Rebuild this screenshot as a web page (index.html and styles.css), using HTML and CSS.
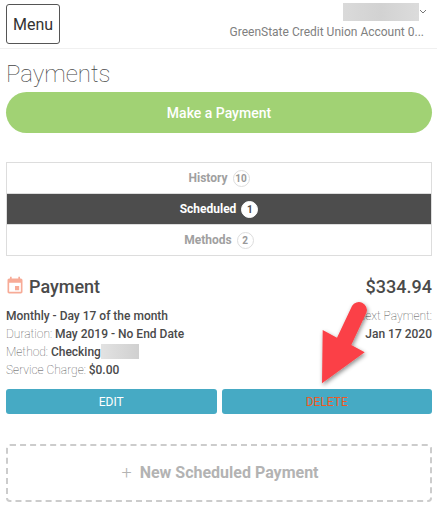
FILE: index.html
```html
<!DOCTYPE html>
<html lang="en">
<head>
    <meta charset="UTF-8">
    <meta name="viewport" content="width=device-width, initial-scale=1.0">
    <title>Payments</title>
    <link rel="stylesheet" href="styles.css">
</head>
<body>
    <div class="topbar">
        <button class="menu-btn">Menu</button>
        <div class="account">
            <div class="account-top">
                <span class="blur-name"></span>
                <svg class="chevron" width="8" height="5" viewBox="0 0 8 5"><path d="M1 1l3 3 3-3" fill="none" stroke="#777" stroke-width="1"/></svg>
            </div>
            <div class="account-name">GreenState Credit Union Account 0...</div>
        </div>
    </div>

    <div class="page">
        <h1 class="page-title">Payments</h1>
        <button class="pay-btn">Make a Payment</button>

        <ul class="tabs">
            <li class="tab">History <span class="count">10</span></li>
            <li class="tab active">Scheduled <span class="count">1</span></li>
            <li class="tab">Methods <span class="count">2</span></li>
        </ul>

        <div class="payment">
            <div class="payment-head">
                <h2 class="payment-title">
                    <svg class="cal-icon" width="20" height="20" viewBox="0 0 24 24"><path fill="#f7ab97" d="M19 3h-1V1h-2v2H8V1H6v2H5c-1.100 0-2 .9-2 2v14c0 1.100.9 2 2 2h14c1.100 0 2-.9 2-2V5c0-1.100-.9-2-2-2zm0 16H5V8h14v11zM12 12h5v5h-5z"/></svg>
                    Payment
                </h2>
                <div class="amount">$334.94</div>
            </div>
            <div class="details">
                <div class="details-left">
                    <div><b>Monthly - Day 17 of the month</b></div>
                    <div>Duration: <b>May 2019 - No End Date</b></div>
                    <div>Method: <b>Checking</b><span class="blur-acct"></span></div>
                    <div>Service Charge: <b>$0.00</b></div>
                </div>
                <div class="details-right">
                    <div>Next Payment:</div>
                    <div><b>Jan 17 2020</b></div>
                </div>
            </div>
            <div class="actions">
                <button class="action-btn">EDIT</button>
                <button class="action-btn delete">DELETE</button>
            </div>
        </div>

        <div class="new-payment"><span class="plus">+</span> New Scheduled Payment</div>
    </div>

    <svg class="arrow" width="60" height="100" viewBox="0 0 60 100">
        <defs>
            <filter id="shadow" x="-30%" y="-30%" width="160%" height="160%">
                <feDropShadow dx="1" dy="2" stdDeviation="2" flood-color="#000" flood-opacity="0.45"/>
            </filter>
        </defs>
        <path filter="url(#shadow)" fill="#fb4146" d="M20 41.700L35 10A8 8 0 0 1 49.500 16.500L34.300 49L47.700 56.300L5 87.300L5.700 34Z"/>
    </svg>
</body>
</html>
```

FILE: styles.css
```css
* {
    box-sizing: border-box;
}

body {
    margin: 0;
    font-family: Roboto, sans-serif;
    color: #4a4a4a;
    background-color: #fff;
    position: relative;
}

button {
    font-family: Roboto, sans-serif;
    cursor: pointer;
}

.topbar {
    display: flex;
    justify-content: space-between;
    height: 49px;
    padding: 4px 13px 0 6px;
    border-bottom: 1px solid #f0f0f0;
}

.menu-btn {
    width: 54px;
    height: 40px;
    padding: 0;
    font-size: 16px;
    color: #333;
    background: #fff;
    border: 1px solid #555;
    border-radius: 3px;
}

.account {
    display: flex;
    flex-direction: column;
    align-items: flex-end;
}

.account-top {
    display: flex;
    align-items: center;
    height: 18px;
    margin-top: -1px;
}

.blur-name {
    width: 76px;
    height: 18px;
    background: linear-gradient(90deg, #dadada, #d2d2d2 50%, #dcdcdc);
}

.chevron {
    margin: 0 -3px 0 0;
    position: relative;
    top: -1px;
}

.account-name {
    margin-top: 3px;
    font-size: 12px;
    line-height: 16px;
    color: #808080;
    white-space: nowrap;
}

.page {
    padding: 0 5px 0 6px;
}

.page-title {
    margin: 9px 0 2px;
    font-size: 24px;
    font-weight: 100;
    line-height: 32px;
    color: #444;
}

.pay-btn {
    display: block;
    width: 100%;
    height: 41px;
    font-size: 14px;
    font-weight: 500;
    color: #fff;
    background-color: #a1d274;
    border: none;
    border-radius: 21px;
}

.tabs {
    list-style: none;
    margin: 29px 0 0;
    padding: 0;
    border: 1px solid #ddd;
}

.tab {
    height: 31px;
    font-size: 12px;
    font-weight: 700;
    line-height: 30px;
    text-align: center;
    color: #a0a0a0;
}

.tab:first-child {
    height: 30px;
}

.tab + .tab {
    border-top: 1px solid #ddd;
}

.tab.active {
    color: #fff;
    background-color: #4d4d4d;
}

.count {
    display: inline-block;
    width: 17px;
    height: 17px;
    margin-left: 2px;
    font-size: 10px;
    line-height: 15px;
    text-align: center;
    color: #999;
    border: 1px solid #ddd;
    border-radius: 50%;
    vertical-align: middle;
}

.tab.active .count {
    color: #4d4d4d;
    background: #fff;
    border-color: #fff;
}

.payment {
    margin-top: 19px;
}

.payment-head {
    display: flex;
    justify-content: space-between;
    align-items: center;
    height: 22px;
}

.payment-title {
    display: flex;
    align-items: center;
    margin: 0;
    font-size: 18px;
    font-weight: 500;
}

.cal-icon {
    margin: 0 4px 0 -1px;
}

.amount {
    font-size: 18px;
    font-weight: 500;
}

.details {
    display: flex;
    justify-content: space-between;
    margin-top: 10px;
    font-size: 12px;
    font-weight: 100;
    line-height: 18px;
}

.details b {
    font-weight: 500;
}

.details-right {
    text-align: right;
}

.blur-acct {
    display: inline-block;
    width: 38px;
    height: 15px;
    vertical-align: -3px;
    background: linear-gradient(90deg, #e2e2e2, #d0d0d0);
}

.actions {
    display: flex;
    gap: 5px;
    margin-top: 10px;
}

.action-btn {
    flex: 1;
    height: 25px;
    padding: 0;
    font-size: 12px;
    color: #fff;
    background-color: #46aac4;
    border: none;
    border-radius: 3px;
}

.action-btn.delete {
    color: #ee5a24;
}

.new-payment {
    display: flex;
    align-items: center;
    justify-content: center;
    gap: 8px;
    height: 58px;
    margin-top: 30px;
    padding: 0 0 2px 2px;
    font-size: 16px;
    font-weight: 700;
    color: #b3b3b3;
    border: 2px dashed #ccc;
    border-radius: 4px;
}

.plus {
    font-size: 18px;
    font-weight: 300;
}

.arrow {
    position: absolute;
    left: 317px;
    top: 296px;
}
```
